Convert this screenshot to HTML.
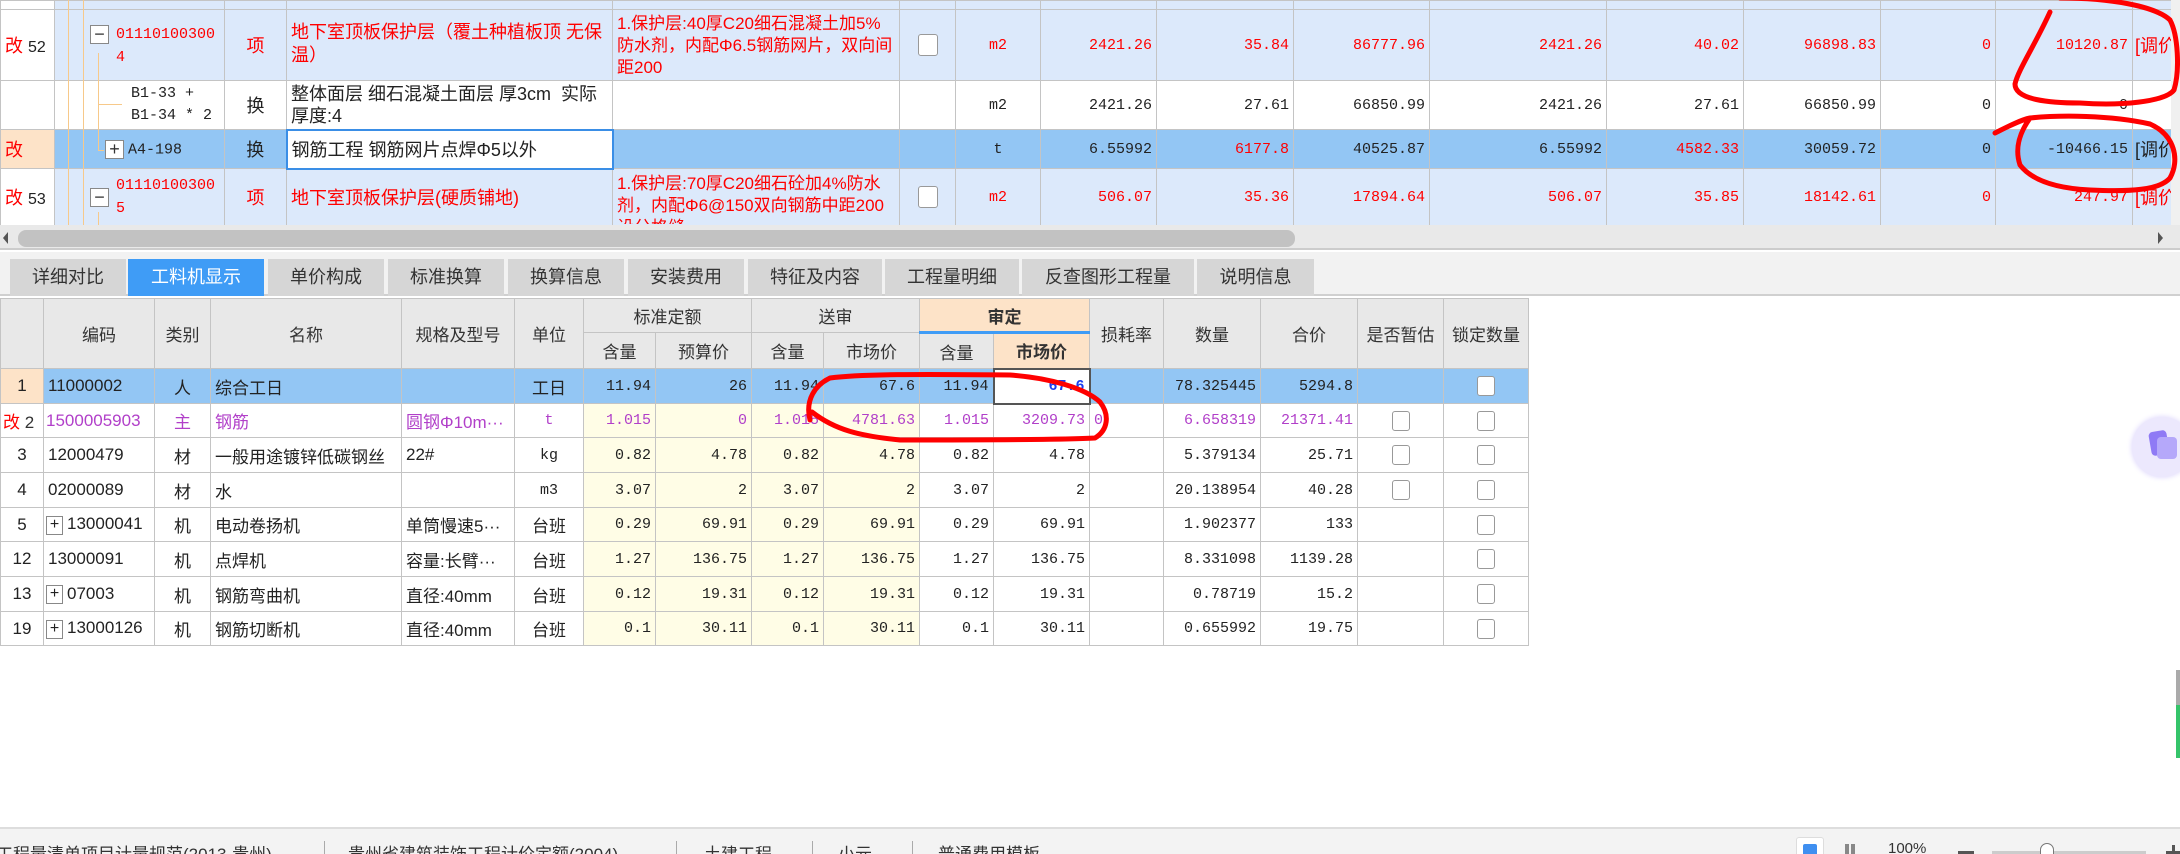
<!DOCTYPE html>
<html><head><meta charset="utf-8">
<style>
*{margin:0;padding:0;box-sizing:border-box}
body{width:2180px;height:854px;overflow:hidden;background:#fff;font-family:"Liberation Sans","Noto Sans CJK SC",sans-serif;font-size:17px;color:#222;position:relative}
table{border-collapse:collapse;table-layout:fixed;position:absolute}
td{border:1px solid #c4c4c4;padding:0 4px;white-space:nowrap;overflow:hidden;vertical-align:middle}
.r{text-align:right}.c{text-align:center}
.red{color:#f00}.pur{color:#b13fc9}
.mono{font-family:"Liberation Mono","Noto Sans CJK SC",monospace;font-size:15px}
.lb td{background:#dce9fb}
.sel td{background:#93c6f4}
.wrap{white-space:normal;line-height:22px}
.cb{display:inline-block;width:20px;height:22px;border:1.5px solid #999;border-radius:3px;background:#fff;vertical-align:middle}
.cbs{display:inline-block;width:18px;height:20px;border:1.5px solid #999;border-radius:3px;background:#fff;vertical-align:middle}
.bx{display:inline-block;width:19px;height:19px;border:1px solid #888;background:#fff;text-align:center;line-height:16px;font-size:18px;vertical-align:middle;margin-right:4px;font-family:"Liberation Sans",sans-serif}
.tab{position:absolute;top:259px;height:37px;background:#d6d6d6;text-align:center;line-height:37px;font-size:18px;color:#333}
.hd td{background:#e8e8e8;text-align:center;color:#333}
.y{background:#fffde6}
.st{position:absolute;top:838px;font-size:17px;color:#333}
.clip{overflow:hidden;white-space:normal}
#top td{font-size:18px}
#top td.mono{font-size:15px}
</style></head><body>

<div style="position:absolute;left:0;top:0;width:2171px;height:225px;overflow:hidden">
<table id="top" style="left:0;top:0;width:2171px">
<colgroup><col style="width:54px"><col style="width:170px"><col style="width:62px"><col style="width:326px"><col style="width:287px"><col style="width:56px"><col style="width:85px"><col style="width:116px"><col style="width:137px"><col style="width:136px"><col style="width:177px"><col style="width:137px"><col style="width:137px"><col style="width:115px"><col style="width:137px"><col style="width:39px"></colgroup>
<tr class="lb" style="height:9px"><td style="background:#fff"></td><td></td><td></td><td></td><td></td><td></td><td></td><td></td><td></td><td></td><td></td><td></td><td></td><td></td><td></td><td></td></tr>
<tr class="lb" style="height:71px"><td style="background:#fff"><span class="red">改</span> <span style="font-size:16px">52</span></td><td style="padding-left:35px" class="red mono"><div style="position:relative;height:69px"><span class="bx" style="position:absolute;left:0;top:14px;color:#333">−</span><div style="position:absolute;left:26px;top:12px;line-height:23px">01110100300<br>4</div></div></td><td class="c red">项</td><td class="red"><div class="clip" style="height:69px;line-height:23px;padding-top:10px">地下室顶板保护层（覆土种植板顶 无保温）</div></td><td class="red"><div class="clip" style="height:69px;line-height:22px;padding-top:2px;font-size:17px">1.保护层:40厚C20细石混凝土加5%防水剂，内配Φ6.5钢筋网片，双向间距200</div></td><td class="c"><span class="cb"></span></td><td class="c red mono">m2</td><td class="r red mono">2421.26</td><td class="r red mono">35.84</td><td class="r red mono">86777.96</td><td class="r red mono">2421.26</td><td class="r red mono">40.02</td><td class="r red mono">96898.83</td><td class="r red mono">0</td><td class="r red mono">10120.87</td><td class="red" style="padding:0 2px">[调价</td></tr>
<tr style="height:49px"><td></td><td class="mono" style="padding-left:76px"><div style="line-height:22px">B1-33 +<br>B1-34 * 2</div></td><td class="c">换</td><td><div class="clip" style="height:47px;line-height:22px;padding-top:2px">整体面层 细石混凝土面层 厚3cm&nbsp; 实际厚度:4</div></td><td></td><td></td><td class="c mono">m2</td><td class="r mono">2421.26</td><td class="r mono">27.61</td><td class="r mono">66850.99</td><td class="r mono">2421.26</td><td class="r mono">27.61</td><td class="r mono">66850.99</td><td class="r mono">0</td><td class="r mono">0</td><td></td></tr>
<tr class="sel" style="height:39px"><td style="background:#fde3c8" class="red">改</td><td class="mono" style="padding-left:50px"><span class="bx" style="color:#333">+</span>A4-198</td><td class="c">换</td><td style="background:#fff;border:2px solid #3a8ee6">钢筋工程 钢筋网片点焊Φ5以外</td><td></td><td></td><td class="c mono">t</td><td class="r mono">6.55992</td><td class="r red mono">6177.8</td><td class="r mono">40525.87</td><td class="r mono">6.55992</td><td class="r red mono">4582.33</td><td class="r mono">30059.72</td><td class="r mono">0</td><td class="r mono">-10466.15</td><td style="padding:0 2px">[调价</td></tr>
<tr class="lb" style="height:57px"><td style="background:#fff"><span class="red">改</span> <span style="font-size:16px">53</span></td><td style="padding-left:35px" class="red mono"><div style="position:relative;height:55px"><span class="bx" style="position:absolute;left:0;top:18px;color:#333">−</span><div style="position:absolute;left:26px;top:4px;line-height:23px">01110100300<br>5</div></div></td><td class="c red">项</td><td class="red">地下室顶板保护层(硬质铺地)</td><td class="red" style="vertical-align:top"><div class="clip" style="height:55px;line-height:22px;padding-top:4px;font-size:17px">1.保护层:70厚C20细石砼加4%防水剂，内配Φ6@150双向钢筋中距200设分格缝</div></td><td class="c"><span class="cb"></span></td><td class="c red mono">m2</td><td class="r red mono">506.07</td><td class="r red mono">35.36</td><td class="r red mono">17894.64</td><td class="r red mono">506.07</td><td class="r red mono">35.85</td><td class="r red mono">18142.61</td><td class="r red mono">0</td><td class="r red mono">247.97</td><td class="red" style="padding:0 2px">[调价</td></tr>
</table>
</div>
<!-- tree lines -->
<div style="position:absolute;left:68px;top:0;width:1px;height:225px;background:#f7c98a"></div>
<div style="position:absolute;left:83px;top:0;width:1px;height:225px;background:#f7c98a"></div>
<div style="position:absolute;left:98px;top:53px;width:1px;height:98px;background:#f7c98a"></div>
<div style="position:absolute;left:98px;top:104px;width:24px;height:1px;background:#f7c98a"></div>
<div style="position:absolute;left:98px;top:150px;width:6px;height:1px;background:#f7c98a"></div>
<div style="position:absolute;left:98px;top:212px;width:1px;height:14px;background:#f7c98a"></div>
<div style="position:absolute;left:2171px;top:0;width:9px;height:225px;background:#f0f0f0"></div>

<!-- h scrollbar -->
<div style="position:absolute;left:0;top:225px;width:2180px;height:25px;background:#e9e9e9;border-bottom:2px solid #ccc"></div>
<div style="position:absolute;left:18px;top:230px;width:1277px;height:17px;background:#c2c2c2;border-radius:8px"></div>
<div style="position:absolute;left:3px;top:232px;width:0;height:0;border:6px solid transparent;border-right:5px solid #555;border-left:0"></div>
<div style="position:absolute;left:2158px;top:232px;width:0;height:0;border:6px solid transparent;border-left:5px solid #555;border-right:0"></div>

<!-- tabs -->
<div style="position:absolute;left:0;top:252px;width:2180px;height:44px;background:#f2f2f2;border-bottom:2px solid #d0d0d0"></div>
<div class="tab" style="left:10px;width:116px">详细对比</div>
<div class="tab" style="left:128px;width:136px;background:#3f9cf6;color:#fff">工料机显示</div>
<div class="tab" style="left:268px;width:116px">单价构成</div>
<div class="tab" style="left:388px;width:116px">标准换算</div>
<div class="tab" style="left:508px;width:116px">换算信息</div>
<div class="tab" style="left:628px;width:116px">安装费用</div>
<div class="tab" style="left:748px;width:134px">特征及内容</div>
<div class="tab" style="left:885px;width:134px">工程量明细</div>
<div class="tab" style="left:1022px;width:172px">反查图形工程量</div>
<div class="tab" style="left:1197px;width:117px">说明信息</div>

<!-- bottom table -->
<table style="left:0;top:298px;width:1528px">
<colgroup><col style="width:43px"><col style="width:111px"><col style="width:56px"><col style="width:191px"><col style="width:113px"><col style="width:69px"><col style="width:72px"><col style="width:96px"><col style="width:72px"><col style="width:96px"><col style="width:74px"><col style="width:96px"><col style="width:74px"><col style="width:97px"><col style="width:97px"><col style="width:86px"><col style="width:85px"></colgroup>
<tr class="hd" style="height:34px"><td rowspan="2"></td><td rowspan="2">编码</td><td rowspan="2">类别</td><td rowspan="2">名称</td><td rowspan="2">规格及型号</td><td rowspan="2">单位</td><td colspan="2">标准定额</td><td colspan="2">送审</td><td colspan="2" style="background:#fde3c8;font-weight:bold;border-bottom:3px solid #3f9cf6">审定</td><td rowspan="2">损耗率</td><td rowspan="2">数量</td><td rowspan="2">合价</td><td rowspan="2">是否暂估</td><td rowspan="2">锁定数量</td></tr>
<tr class="hd" style="height:36px"><td>含量</td><td>预算价</td><td>含量</td><td>市场价</td><td>含量</td><td style="background:#fde3c8;font-weight:bold">市场价</td></tr>
<tr class="sel" style="height:35px"><td class="c" style="background:#fde3c8">1</td><td>11000002</td><td class="c">人</td><td>综合工日</td><td></td><td class="c">工日</td><td class="r mono">11.94</td><td class="r mono">26</td><td class="r mono">11.94</td><td class="r mono">67.6</td><td class="r mono">11.94</td><td class="r mono" style="background:#fff;border:2px solid #555;color:#1a3ef0;font-weight:bold">67.6</td><td></td><td class="r mono">78.325445</td><td class="r mono">5294.8</td><td></td><td class="c"><span class="cbs"></span></td></tr>
<tr style="height:34px" class="pur"><td style="padding:0 2px"><span class="red">改</span> <span style="color:#333">2</span></td><td style="padding:0 2px">1500005903</td><td class="c">主</td><td>钢筋</td><td>圆钢Φ10m···</td><td class="c mono">t</td><td class="r mono y">1.015</td><td class="r mono y">0</td><td class="r mono y">1.015</td><td class="r mono y">4781.63</td><td class="r mono">1.015</td><td class="r mono">3209.73</td><td class="mono">0</td><td class="r mono">6.658319</td><td class="r mono">21371.41</td><td class="c"><span class="cbs"></span></td><td class="c"><span class="cbs"></span></td></tr>
<tr style="height:35px"><td class="c">3</td><td>12000479</td><td class="c">材</td><td>一般用途镀锌低碳钢丝</td><td>22#</td><td class="c mono">kg</td><td class="r mono y">0.82</td><td class="r mono y">4.78</td><td class="r mono y">0.82</td><td class="r mono y">4.78</td><td class="r mono">0.82</td><td class="r mono">4.78</td><td></td><td class="r mono">5.379134</td><td class="r mono">25.71</td><td class="c"><span class="cbs"></span></td><td class="c"><span class="cbs"></span></td></tr>
<tr style="height:35px"><td class="c">4</td><td>02000089</td><td class="c">材</td><td>水</td><td></td><td class="c mono">m3</td><td class="r mono y">3.07</td><td class="r mono y">2</td><td class="r mono y">3.07</td><td class="r mono y">2</td><td class="r mono">3.07</td><td class="r mono">2</td><td></td><td class="r mono">20.138954</td><td class="r mono">40.28</td><td class="c"><span class="cbs"></span></td><td class="c"><span class="cbs"></span></td></tr>
<tr style="height:34px"><td class="c">5</td><td style="padding:0 2px"><span class="bx" style="width:17px;height:19px;font-size:16px">+</span>13000041</td><td class="c">机</td><td>电动卷扬机</td><td>单筒慢速5···</td><td class="c">台班</td><td class="r mono y">0.29</td><td class="r mono y">69.91</td><td class="r mono y">0.29</td><td class="r mono y">69.91</td><td class="r mono">0.29</td><td class="r mono">69.91</td><td></td><td class="r mono">1.902377</td><td class="r mono">133</td><td></td><td class="c"><span class="cbs"></span></td></tr>
<tr style="height:35px"><td class="c">12</td><td>13000091</td><td class="c">机</td><td>点焊机</td><td>容量:长臂···</td><td class="c">台班</td><td class="r mono y">1.27</td><td class="r mono y">136.75</td><td class="r mono y">1.27</td><td class="r mono y">136.75</td><td class="r mono">1.27</td><td class="r mono">136.75</td><td></td><td class="r mono">8.331098</td><td class="r mono">1139.28</td><td></td><td class="c"><span class="cbs"></span></td></tr>
<tr style="height:35px"><td class="c">13</td><td style="padding:0 2px"><span class="bx" style="width:17px;height:19px;font-size:16px">+</span>07003</td><td class="c">机</td><td>钢筋弯曲机</td><td>直径:40mm</td><td class="c">台班</td><td class="r mono y">0.12</td><td class="r mono y">19.31</td><td class="r mono y">0.12</td><td class="r mono y">19.31</td><td class="r mono">0.12</td><td class="r mono">19.31</td><td></td><td class="r mono">0.78719</td><td class="r mono">15.2</td><td></td><td class="c"><span class="cbs"></span></td></tr>
<tr style="height:34px"><td class="c">19</td><td style="padding:0 2px"><span class="bx" style="width:17px;height:19px;font-size:16px">+</span>13000126</td><td class="c">机</td><td>钢筋切断机</td><td>直径:40mm</td><td class="c">台班</td><td class="r mono y">0.1</td><td class="r mono y">30.11</td><td class="r mono y">0.1</td><td class="r mono y">30.11</td><td class="r mono">0.1</td><td class="r mono">30.11</td><td></td><td class="r mono">0.655992</td><td class="r mono">19.75</td><td></td><td class="c"><span class="cbs"></span></td></tr>
</table>

<!-- floating widget -->
<div style="position:absolute;left:2132px;top:417px;width:60px;height:60px;border-radius:30px;background:#ece8fd;box-shadow:0 0 6px #d8d0fb"></div>
<div style="position:absolute;left:2150px;top:431px;width:18px;height:24px;border-radius:4px;background:#8f7af5;transform:rotate(-10deg)"></div>
<div style="position:absolute;left:2157px;top:437px;width:20px;height:22px;border-radius:4px;background:#b5a8fa"></div>
<div style="position:absolute;left:2176px;top:670px;width:4px;height:35px;background:#aaa"></div>
<div style="position:absolute;left:2176px;top:705px;width:4px;height:53px;background:#35c46a"></div>

<!-- status bar -->
<div style="position:absolute;left:0;top:827px;width:2180px;height:27px;background:#f3f3f3;border-top:2px solid #ddd;overflow:hidden">
<div class="st" style="top:11px;left:-4px">工程量清单项目计量规范(2013-贵州)</div>
<div style="position:absolute;left:324px;top:12px;width:1px;height:20px;background:#aaa"></div>
<div class="st" style="top:11px;left:348px">贵州省建筑装饰工程计价定额(2004)</div>
<div style="position:absolute;left:676px;top:12px;width:1px;height:20px;background:#aaa"></div>
<div class="st" style="top:11px;left:704px">土建工程</div>
<div style="position:absolute;left:812px;top:12px;width:1px;height:20px;background:#aaa"></div>
<div class="st" style="top:11px;left:838px">小元</div>
<div style="position:absolute;left:912px;top:12px;width:1px;height:20px;background:#aaa"></div>
<div class="st" style="top:11px;left:938px">普通费用模板</div>
<div style="position:absolute;left:1796px;top:8px;width:28px;height:26px;background:#fff;border:1px solid #ddd;border-radius:3px"></div>
<div style="position:absolute;left:1803px;top:15px;width:14px;height:14px;background:#3f8ff0;border-radius:2px"></div>
<div style="position:absolute;left:1845px;top:15px;width:4px;height:14px;background:#888"></div>
<div style="position:absolute;left:1851px;top:15px;width:4px;height:14px;background:#888"></div>
<div class="st" style="top:11px;left:1888px;font-size:15px">100%</div>
<div style="position:absolute;left:1958px;top:22px;width:16px;height:3px;background:#555"></div>
<div style="position:absolute;left:1992px;top:22px;width:154px;height:3px;background:#ccc"></div>
<div style="position:absolute;left:2040px;top:14px;width:14px;height:20px;border:1.5px solid #777;border-radius:7px;background:#fff"></div>
<div style="position:absolute;left:2166px;top:22px;width:14px;height:3px;background:#555"></div>
<div style="position:absolute;left:2172px;top:16px;width:3px;height:14px;background:#555"></div>
</div>

<!-- red annotations -->
<svg width="2180" height="854" style="position:absolute;left:0;top:0" fill="none" stroke="#f00" stroke-width="5" stroke-linecap="round" stroke-linejoin="round">
<path d="M2050 12 C2035 45 2018 70 2015 84 C2015 100 2050 103 2080 103 C2120 106 2165 102 2174 90 C2180 70 2178 35 2170 20 C2155 6 2110 -2 2060 -2"/>
<path d="M1995 133 C2005 128 2020 120 2030 118 M2030 118 C2060 115 2110 115 2150 124 C2175 135 2180 160 2170 178 C2160 190 2130 192 2090 190 C2050 188 2030 178 2020 165 C2015 150 2018 135 2030 118"/>
<path d="M810 420 C805 400 815 385 830 378 C860 374 920 374 1010 375 C1050 378 1085 388 1100 402 C1110 415 1108 430 1095 438 C1060 440 960 440 900 440 C860 436 835 430 812 412"/>
</svg>
</body></html>
